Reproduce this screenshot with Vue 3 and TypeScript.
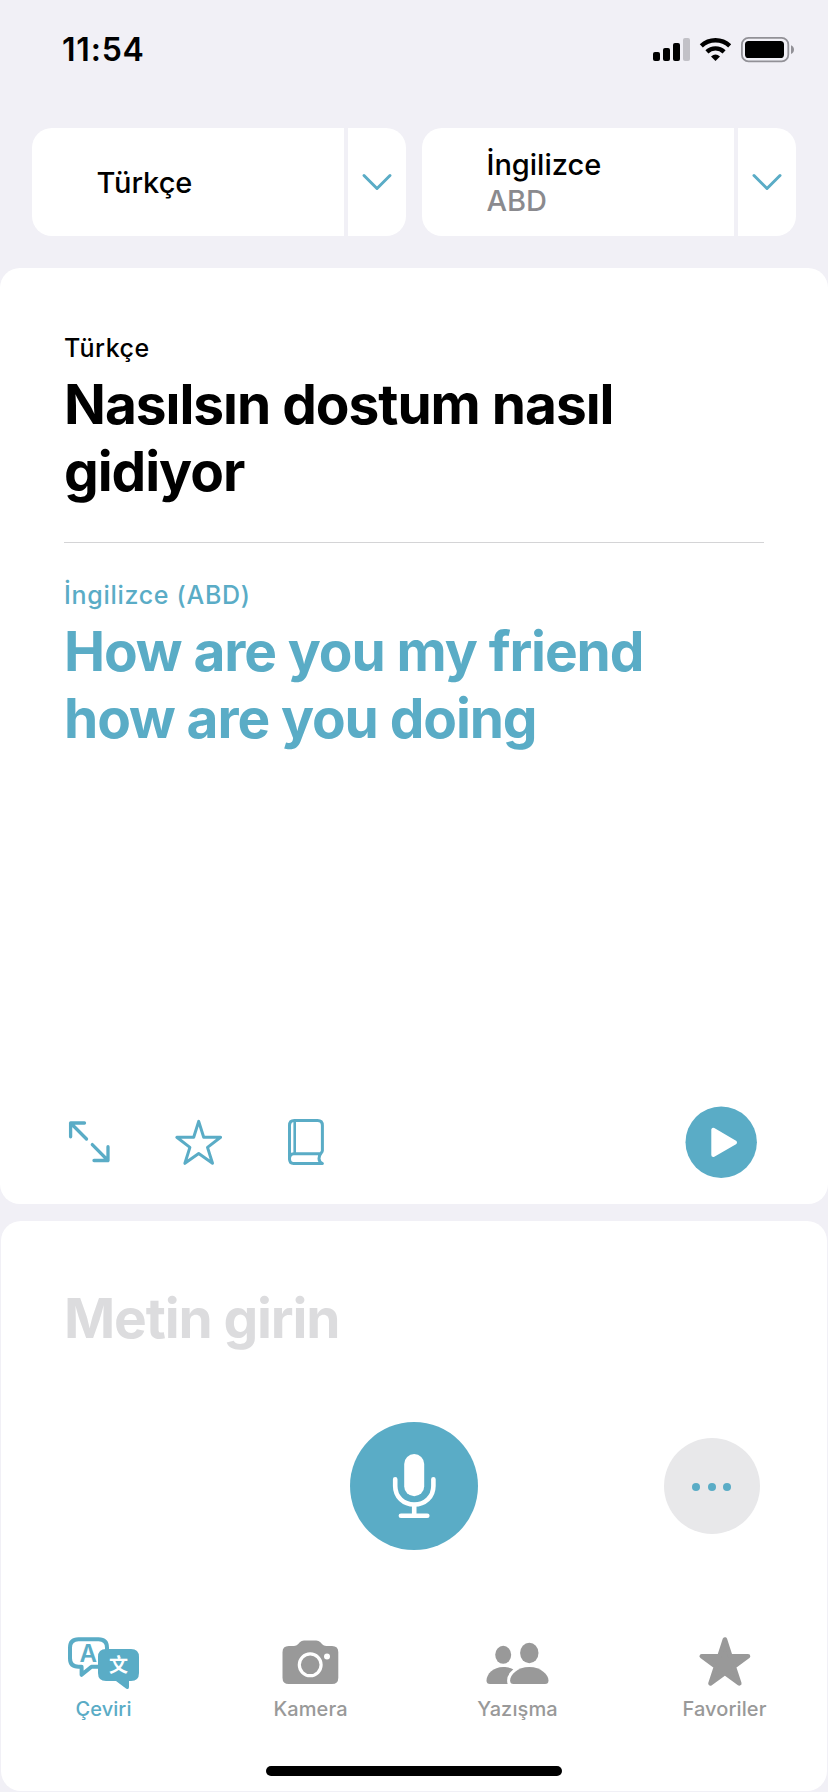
<script setup lang="ts">
interface Language {
  name: string
  region?: string
}

const languages: Language[] = [{ name: 'Türkçe' }, { name: 'İngilizce', region: 'ABD' }]

const tabs = [
  { id: 'translate', label: 'Çeviri', active: true },
  { id: 'camera', label: 'Kamera', active: false },
  { id: 'chat', label: 'Yazışma', active: false },
  { id: 'favorites', label: 'Favoriler', active: false },
]
</script>

<template>
  <div class="screen">
    <header class="status">
      <span class="time">11:54</span>
      <svg class="status-icons" viewBox="652 32 144 36" width="144" height="36">
        <rect x="653" y="52" width="7" height="9" rx="2" />
        <rect x="663" y="48" width="7" height="13" rx="2" />
        <rect x="673" y="43" width="7" height="18" rx="2" />
        <rect x="683" y="38" width="7" height="23" rx="2" fill="#c2c1c7" />
        <g fill="none" stroke="#000" stroke-width="4.4">
          <path d="M701.3 45.9 A20.6 20.6 0 0 1 729.7 45.9" />
          <path d="M706.9 51.8 A12.6 12.6 0 0 1 724.1 51.8" />
        </g>
        <path d="M715.5 61 L711 56.6 Q715.5 52.6 720 56.6 Z" />
        <rect x="741.9" y="37.9" width="46.4" height="23.4" rx="6.6" fill="none" stroke="#929197" stroke-width="1.8" />
        <rect x="745" y="41" width="39" height="17" rx="3.6" />
        <path d="M791 45.2 Q794 46.5 794 49.6 Q794 52.7 791 54 Z" fill="#929197" />
      </svg>
    </header>

    <nav class="languages">
      <div v-for="lang in languages" :key="lang.name" class="language">
        <button class="language-name">
          <span>{{ lang.name }}</span>
          <span v-if="lang.region" class="region">{{ lang.region }}</span>
        </button>
        <button class="language-toggle">
          <svg viewBox="0 0 32 20" width="32" height="20">
            <path d="M3 3.5 L16 16.5 L29 3.5" fill="none" stroke="#5aacc6" stroke-width="3" stroke-linecap="round" stroke-linejoin="round" />
          </svg>
        </button>
      </div>
    </nav>

    <main class="card result">
      <section class="entry">
        <p class="caption">Türkçe</p>
        <h2 class="phrase source">Nasılsın dostum nasıl gidiyor</h2>
      </section>
      <hr class="divider" />
      <section class="entry translated">
        <p class="caption wide">İngilizce (ABD)</p>
        <h2 class="phrase target">How are you my friend how are you doing</h2>
      </section>

      <div class="actions">
        <svg viewBox="64 1106 264 72" width="264" height="72" fill="none" stroke="#5aacc6" stroke-width="3" stroke-linecap="round" stroke-linejoin="round">
          <g stroke-width="3.3">
            <path d="M84.5 1123 H70.6 V1136.8 M70.6 1123 L86.5 1139" />
            <path d="M94 1160.5 H108 V1146.7 M108 1160.5 L92.3 1144.6" />
          </g>
          <path d="M198.7 1121.4 L203.7 1137.3 H220.6 L207.5 1147.4 L212.5 1163.3 L198.7 1153.6 L184.9 1163.3 L189.9 1147.4 L176.8 1137.3 H193.7 Z" />
          <path d="M289.5 1159.5 V1125.5 Q289.5 1120.6 294.4 1120.6 H317.5 Q322.4 1120.6 322.4 1125.5 V1150.5 C322.4 1153 319 1153.5 319 1158.5 C319 1161.5 320.5 1162.5 322.4 1163.5 H293.5 Q289.5 1163.5 289.5 1158.8 Q289.5 1153.8 293.8 1153.8 H320.5" />
          <path d="M294.7 1121 V1153.5" stroke-width="2.6" />
        </svg>
        <button class="play">
          <svg viewBox="0 0 72 72" width="72" height="72">
            <circle cx="36.2" cy="36.2" r="35.7" fill="#5aacc6" />
            <path d="M28.3 23.8 V49 L50 36.4 Z" fill="#fff" stroke="#fff" stroke-width="4" stroke-linejoin="round" />
          </svg>
        </button>
      </div>
    </main>

    <section class="card composer">
      <p class="placeholder">Metin girin</p>
      <div class="controls">
        <button class="round mic">
          <svg viewBox="390 1450 48 72" width="48" height="72" fill="none" stroke="#fff" stroke-width="4.6" stroke-linecap="round">
            <rect x="404.2" y="1454" width="20" height="42.2" rx="10" fill="#fff" stroke="none" />
            <path d="M395.2 1479.3 V1486 C395.2 1497 403.5 1504.5 414.2 1504.5 C425 1504.5 433.4 1497 433.4 1486 V1479.3" />
            <path d="M414.2 1505 V1515 M400.9 1515.8 H427.3" />
          </svg>
        </button>
        <button class="round more">
          <i></i><i></i><i></i>
        </button>
      </div>

      <nav class="tabs">
        <a v-for="tab in tabs" :key="tab.id" class="tab" :class="[tab.id, { active: tab.active }]">
          <svg v-if="tab.id === 'translate'" viewBox="66 1632 76 60" width="76" height="60">
            <path d="M100 1666.7 H91.5 L81.6 1674.8 V1666.7 H78.5 Q70 1666.7 70 1658.2 V1647.7 Q70 1639.2 78.5 1639.2 H98.5 Q107 1639.2 107 1647.7 V1652" fill="none" stroke="currentColor" stroke-width="4" stroke-linejoin="round" />
            <text class="glyph" x="88.2" y="1662" fill="currentColor">A</text>
            <path d="M106 1649 H131 Q139 1649 139 1657 V1673 Q139 1681 131 1681 H129 V1687 Q129 1690 126 1688.5 L116 1681 H106 Q98 1681 98 1673 V1657 Q98 1649 106 1649 Z" fill="currentColor" />
            <text class="glyph han" x="118.6" y="1671.5" fill="#fff">文</text>
          </svg>
          <svg v-else-if="tab.id === 'camera'" viewBox="272.5 1632 76 60" width="76" height="60">
            <path d="M288 1646 H293.5 Q296 1646 297.5 1644.3 L299.3 1642.3 Q301 1640.5 303.5 1640.5 H315.7 Q318.2 1640.5 319.9 1642.3 L321.7 1644.3 Q323.2 1646 325.7 1646 H331.5 Q337.8 1646 337.8 1652.3 V1677.7 Q337.8 1684 331.5 1684 H288.3 Q282 1684 282 1677.7 V1652.3 Q282 1646 288.3 1646 Z" fill="currentColor" />
            <circle cx="309.7" cy="1664.8" r="10.9" fill="none" stroke="#fff" stroke-width="3.2" />
            <circle cx="326.5" cy="1656.6" r="3" fill="#fff" />
          </svg>
          <svg v-else-if="tab.id === 'chat'" viewBox="479.5 1632 76 60" width="76" height="60" fill="currentColor">
            <ellipse cx="502.7" cy="1654.8" rx="8" ry="9" />
            <ellipse cx="528.8" cy="1653" rx="9.2" ry="10.2" />
            <path d="M489.5 1684 Q486 1684 486 1680.5 C486 1674 493 1667 502.7 1667 C507 1667 510 1668 513 1669.6 L510 1684 Z" />
            <path d="M513 1684 Q509.6 1684 509.6 1680.5 C509.6 1675 517 1667 528.8 1667 C540.6 1667 548 1675 548 1680.5 Q548 1684 544.5 1684 Z" stroke="#fff" stroke-width="6" paint-order="stroke" />
          </svg>
          <svg v-else viewBox="686.5 1632 76 60" width="76" height="60">
            <path d="M724.4 1639.5 L729.8 1656.2 H747.5 L733.3 1666.7 L738.8 1683.4 L724.4 1673 L710 1683.4 L715.5 1666.7 L701.3 1656.2 H719 Z" fill="currentColor" stroke="currentColor" stroke-width="4.6" stroke-linejoin="round" />
          </svg>
          <span>{{ tab.label }}</span>
        </a>
      </nav>
      <div class="home-bar"></div>
    </section>
  </div>
</template>

<style>
body {
  background: #f1f0f6;
}
</style>

<style scoped>
.screen {
  width: 828px;
  height: 1792px;
  overflow: hidden;
  display: flex;
  flex-direction: column;
  background: #f1f0f6;
  color: #000;
  font-family: Inter, 'Liberation Sans', sans-serif;
}
button {
  border: 0;
  padding: 0;
  font: inherit;
  color: inherit;
  background: none;
}
svg {
  display: block;
}
p,
h2 {
  margin: 0;
}
.status {
  height: 128px;
  padding: 32px 32px 0 62px;
  box-sizing: border-box;
  display: flex;
  align-items: flex-start;
  justify-content: space-between;
}
.time {
  font-size: 32px;
  line-height: 36px;
  font-weight: 600;
  letter-spacing: 0.8px;
}
.languages {
  display: flex;
  gap: 16px;
  padding: 0 32px;
}
.language {
  display: flex;
  gap: 4px;
  width: 374px;
  height: 108px;
  border-radius: 20px;
  overflow: hidden;
}
.language-name {
  width: 312px;
  padding: 2px 0 0 64.5px;
  box-sizing: border-box;
  display: flex;
  flex-direction: column;
  justify-content: center;
  align-items: flex-start;
  background: #fff;
  font-size: 29px;
  line-height: 36px;
  font-weight: 500;
}
.region {
  color: #8a8a8e;
}
.language-toggle {
  flex: 1;
  display: flex;
  align-items: center;
  justify-content: center;
  padding-right: 1px;
  background: #fff;
}
.card {
  background: #fff;
  border-radius: 20px;
  box-sizing: border-box;
  display: flex;
  flex-direction: column;
}
.result {
  margin-top: 32px;
  height: 936px;
  padding: 65px 64px 26px;
}
.caption {
  font-size: 25px;
  line-height: 30px;
  font-weight: 500;
  letter-spacing: 0.5px;
}
.caption.wide {
  letter-spacing: 0.7px;
}
.phrase {
  margin-top: 8px;
  font-size: 55px;
  line-height: 67px;
  font-weight: 700;
  letter-spacing: -1.1px;
}
.phrase.source {
  letter-spacing: -1.03px;
}
.divider {
  width: 100%;
  height: 1px;
  margin: 37px 0;
  border: 0;
  background: #d4d4d6;
}
.translated {
  color: #5aacc6;
}
.actions {
  margin-top: auto;
  display: flex;
  justify-content: space-between;
  padding-right: 7px;
}
.composer {
  margin: 17px 1px 1px;
  height: 570px;
  padding-top: 64px;
}
.placeholder {
  padding-left: 63px;
  font-size: 55px;
  line-height: 67px;
  font-weight: 700;
  letter-spacing: -1.15px;
  color: #dcdcde;
}
.controls {
  display: grid;
  grid-template-columns: 1fr 128px 1fr;
  align-items: center;
  margin-top: 70px;
}
.round {
  display: flex;
  align-items: center;
  justify-content: center;
  border-radius: 50%;
}
.mic {
  grid-column: 2;
  width: 128px;
  height: 128px;
  background: #5aacc6;
}
.more {
  justify-self: end;
  margin-right: 67px;
  width: 96px;
  height: 96px;
  padding: 2px 1px 0 0;
  box-sizing: border-box;
  gap: 7.5px;
  background: #e8e8ea;
}
.more i {
  width: 8px;
  height: 8px;
  border-radius: 50%;
  background: #5aacc6;
}
.tabs {
  display: grid;
  grid-template-columns: repeat(4, 207px);
  margin: 82px -1px 0;
}
.tab {
  display: flex;
  flex-direction: column;
  align-items: center;
  gap: 5px;
  color: #999;
  font-size: 20px;
  line-height: 24px;
  font-weight: 500;
  letter-spacing: 0.1px;
}
.tab.active {
  color: #5aacc6;
}
.glyph {
  font-size: 24px;
  font-weight: 600;
  letter-spacing: 0;
  text-anchor: middle;
}
.han {
  font-family: 'Noto Sans CJK SC', sans-serif;
  font-size: 19px;
  font-weight: 700;
}
.home-bar {
  width: 296px;
  height: 10px;
  margin: 45px auto 0;
  border-radius: 5px;
  background: #000;
}
</style>
